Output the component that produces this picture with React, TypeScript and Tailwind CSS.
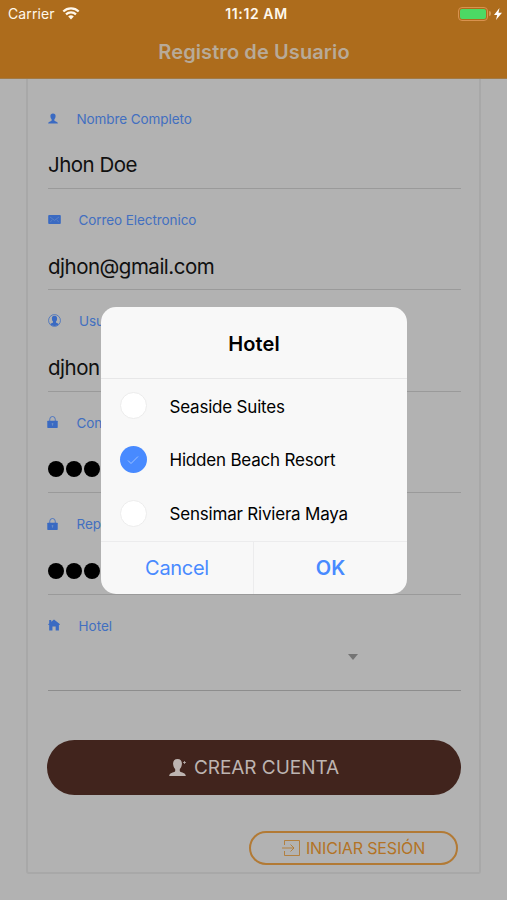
import React from "react";

const PersonIcon = ({ className }: { className: string }) => (
  <svg viewBox="0 0 20 20" className={className} fill="currentColor" aria-hidden="true">
    <path d="M10 0C6.500 0 4.700 2.200 4.800 5.500c.1 2.600 1 4.700 2.400 6.200.3 1.600.2 2.700-.5 3.400C5.400 16.300.7 16 .2 20h19.600c-.5-4-5.200-3.700-6.500-4.900-.7-.7-.8-1.800-.5-3.400 1.400-1.500 2.300-3.600 2.400-6.200C15.300 2.200 13.500 0 10 0z" />
  </svg>
);

const MailIcon = () => (
  <svg viewBox="0 0 14 10" className="w-[13px] h-[9px]" aria-hidden="true">
    <rect x="0" y="0" width="14" height="10" rx="1" fill="currentColor" />
    <path d="M2 2.200 7 6l5-3.800M2.200 7.800 4.500 5.600M11.800 7.800 9.500 5.600" fill="none" stroke="#7893c6" strokeWidth="0.600" />
  </svg>
);

const ContactIcon = () => (
  <svg viewBox="0 0 14 14" className="w-[13px] h-[13px]" aria-hidden="true">
    <circle cx="7" cy="7" r="6.400" fill="none" stroke="currentColor" strokeWidth="0.800" />
    <path d="M7 1.800C5 1.800 4.100 3.100 4.200 5c.1 1.400.5 2.300 1.200 3 .1.700 0 1.100-.3 1.400-.7.500-2 .6-2.900 1.500A6 6 0 0 0 7 13a6 6 0 0 0 4.800-2.100c-.9-.9-2.200-1-2.900-1.500-.3-.3-.4-.7-.3-1.400.7-.7 1.100-1.600 1.200-3C9.900 3.100 9 1.800 7 1.800z" fill="currentColor" />
  </svg>
);

const LockIcon = () => (
  <svg viewBox="0 0 12 14" className="w-[11px] h-[14px] -ml-[1px]" aria-hidden="true">
    <path d="M3 6.500V4a3 3 0 0 1 6 0v2.500" fill="none" stroke="currentColor" strokeWidth="0.900" />
    <rect x="0.300" y="5.600" width="11.400" height="7.900" rx="0.700" fill="currentColor" />
    <path d="M6 8.300v2.700M5 9h2" stroke="#6f8fc8" strokeWidth="0.900" />
  </svg>
);

const HomeIcon = () => (
  <svg viewBox="0 0 13 13" className="w-[12px] h-[12px]" fill="currentColor" aria-hidden="true">
    <path d="M6.500.6 13 5.800l-.6.800-.6-.4V12.500H8.300V8H4.800v4.500H1.300V6.200l-.6.400L.1 5.800l1.200-1V1.200h2.200v1.900z" />
  </svg>
);

const fields = [
  { icon: <PersonIcon className="w-[10px] h-[11px]" />, label: "Nombre Completo", value: "Jhon Doe", gap: "pl-[28.5px]" },
  { icon: <MailIcon />, label: "Correo Electronico", value: "djhon@gmail.com", gap: "pl-[30.5px]" },
  { icon: <ContactIcon />, label: "Usuario", value: "djhon", gap: "pl-[31px]" },
  { icon: <LockIcon />, label: "Contraseña", password: true, gap: "pl-[28.5px]" },
  { icon: <LockIcon />, label: "Repetir", password: true, gap: "pl-[28.5px]" },
];

const hotels = [
  { name: "Seaside Suites", checked: false },
  { name: "Hidden Beach Resort", checked: true },
  { name: "Sensimar Riviera Maya", checked: false },
];

const Header = () => (
  <header className="h-[79px] bg-[#ad6c1c] border-b border-[#a17a46]">
    <div className="h-[27px] px-2 grid grid-cols-3 items-center text-[14px] text-[#fff8ec]">
      <div className="flex items-center gap-[7px]">
        <span className="tracking-[0.1px]">Carrier</span>
        <svg viewBox="0 0 18 13" className="w-[18px] h-[13px]" aria-hidden="true">
          <path d="M1.300 4.500a11 11 0 0 1 15.400 0M4 7.400a7.200 7.200 0 0 1 10 0" fill="none" stroke="currentColor" strokeWidth="2.200" />
          <path d="M9 12.500 6.200 9.600a4 4 0 0 1 5.600 0z" fill="currentColor" />
        </svg>
      </div>
      <span className="text-center font-semibold text-[14px] tracking-[0.6px] whitespace-nowrap pl-[6px]">11:12 AM</span>
      <div className="flex items-center justify-end -mr-[3px]">
        <div className="w-[30px] h-[14px] rounded-[4px] border border-[#d9924f] p-[1px]">
          <div className="w-full h-full rounded-[2px] bg-[#4cd964]" />
        </div>
        <div className="w-[2px] h-[5px] ml-[1px] rounded-r-full bg-[#d39b57]" />
        <svg viewBox="0 0 8 12" className="w-[8px] h-[12px] ml-[3px]" fill="white" aria-hidden="true">
          <path d="M5.500 0 0 7h3.200L2 12l6-7.300H4.500z" />
        </svg>
      </div>
    </div>
    <h1 className="h-[50px] pl-[1px] flex items-center justify-center text-[20px] font-semibold text-[#b8aa98] tracking-[0.1px]">
      Registro de Usuario
    </h1>
  </header>
);

const HotelDialog = () => (
  <div role="dialog" className="absolute left-[101px] top-[307px] w-[306px] h-[287px] rounded-[15px] bg-[#f8f8f8] overflow-hidden flex flex-col">
    <h2 className="h-[72px] pt-[2px] flex items-center justify-center border-b border-[#e7e7e8] text-[20px] font-semibold text-black tracking-[0.1px]">
      Hotel
    </h2>
    <div className="h-[162px]">
      {hotels.map(({ name, checked }) => (
        <div key={name} className="h-[53.7px] flex items-center pl-[19px]">
          {checked ? (
            <div className="w-[27px] h-[27px] rounded-full bg-[#488aff] flex items-center justify-center">
              <svg viewBox="0 0 12 10" className="w-[12px] h-[10px] -ml-[2px]" aria-hidden="true">
                <path d="M1 5.500 4 8.500 11 1.500" fill="none" stroke="#b4cfff" strokeWidth="0.800" />
              </svg>
            </div>
          ) : (
            <div className="w-[27px] h-[27px] rounded-full bg-white border border-[#ececec]" />
          )}
          <span className="pl-[22.5px] pt-[3px] text-[17px] text-black tracking-[-0.2px]">{name}</span>
        </div>
      ))}
    </div>
    <div className="flex-1 flex border-t border-[#ececed] text-[20px] text-[#488aff]">
      <button className="w-[153px] border-r border-[#ececed] tracking-[-0.3px]">Cancel</button>
      <button className="flex-1 font-semibold">OK</button>
    </div>
  </div>
);

const App = () => {
  return (
    <div className="relative w-[507px] h-[900px] overflow-hidden bg-[#b2b2b2] font-['Inter',sans-serif]">
      <Header />

      <main className="ml-[26px] w-[455px] h-[795px] rounded-b-[3px] border-x-2 border-b-2 border-[#a8a8a8] pl-[20px] pr-[18px] pt-[8.7px]">
        {fields.map(({ icon, label, value, password, gap }, i) => (
          <div key={i} className="h-[101.4px] pt-[20.5px] border-b border-[#9a9a9a]">
            <div className="h-[20px] flex items-center text-[#3a6ac2]">
              <span className="w-0 flex items-center">
                <span className="shrink-0">{icon}</span>
              </span>
              <span className={`text-[13.5px] text-[#426fc0] tracking-[-0.08px] pt-[1px] ${gap}`}>{label}</span>
            </div>
            <div className="h-[30px] mt-[22px] flex items-center text-[20.5px] text-[#101010] tracking-[-0.5px]">
              {password ? (
                <span className="flex gap-[2px]">
                  {[0, 1, 2].map((dot) => (
                    <span key={dot} className="w-[16px] h-[16px] rounded-full bg-black" />
                  ))}
                </span>
              ) : (
                <span className="pt-[1px]">{value}</span>
              )}
            </div>
          </div>
        ))}

        {/* Hotel select */}
        <div className="h-[96px] pt-[20.5px] border-b border-[#8d8d8d]">
          <div className="h-[20px] flex items-center text-[#3a6ac2]">
            <span className="w-0 flex items-center">
              <span className="shrink-0">
                <HomeIcon />
              </span>
            </span>
            <span className="pl-[30.5px] pt-[1px] text-[13.5px] text-[#426fc0]">Hotel</span>
          </div>
          <div className="flex justify-end pr-[103px] mt-[19px]">
            <svg viewBox="0 0 10 6" className="w-[10px] h-[6px]" fill="#747474" aria-hidden="true">
              <path d="M0 0h10L5 6z" />
            </svg>
          </div>
        </div>

        <button className="mt-[49px] w-[414px] h-[55px] -ml-[1px] rounded-full bg-[#41241d] flex items-center justify-center gap-[8px] text-[19px] text-[#bdb4b1]">
          <span className="relative">
            <PersonIcon className="w-[17px] h-[17px]" />
            <svg viewBox="0 0 4 4" className="absolute right-0 top-[2px] w-[3px] h-[3px]" aria-hidden="true">
              <path d="M2 0v4M0 2h4" stroke="currentColor" strokeWidth="1" />
            </svg>
          </span>
          <span className="tracking-[-0.05px] pt-[2px]">CREAR CUENTA</span>
        </button>

        <button className="mt-[36px] ml-[201px] w-[209px] h-[34px] rounded-full border-2 border-[#b27a35] flex items-center justify-center gap-[6px] text-[16px] text-[#b27325]">
          <svg viewBox="0 0 18 16" className="w-[18px] h-[16px]" fill="none" stroke="currentColor" strokeWidth="0.800" aria-hidden="true">
            <path d="M2.500 5V.5h15v15h-15V11M0 8h12M8.500 4.500 12 8l-3.500 3.500" />
          </svg>
          <span className="tracking-[-0.15px] pt-[1px]">INICIAR SESIÓN</span>
        </button>
      </main>

      <HotelDialog />
    </div>
  );
};

export default App;
